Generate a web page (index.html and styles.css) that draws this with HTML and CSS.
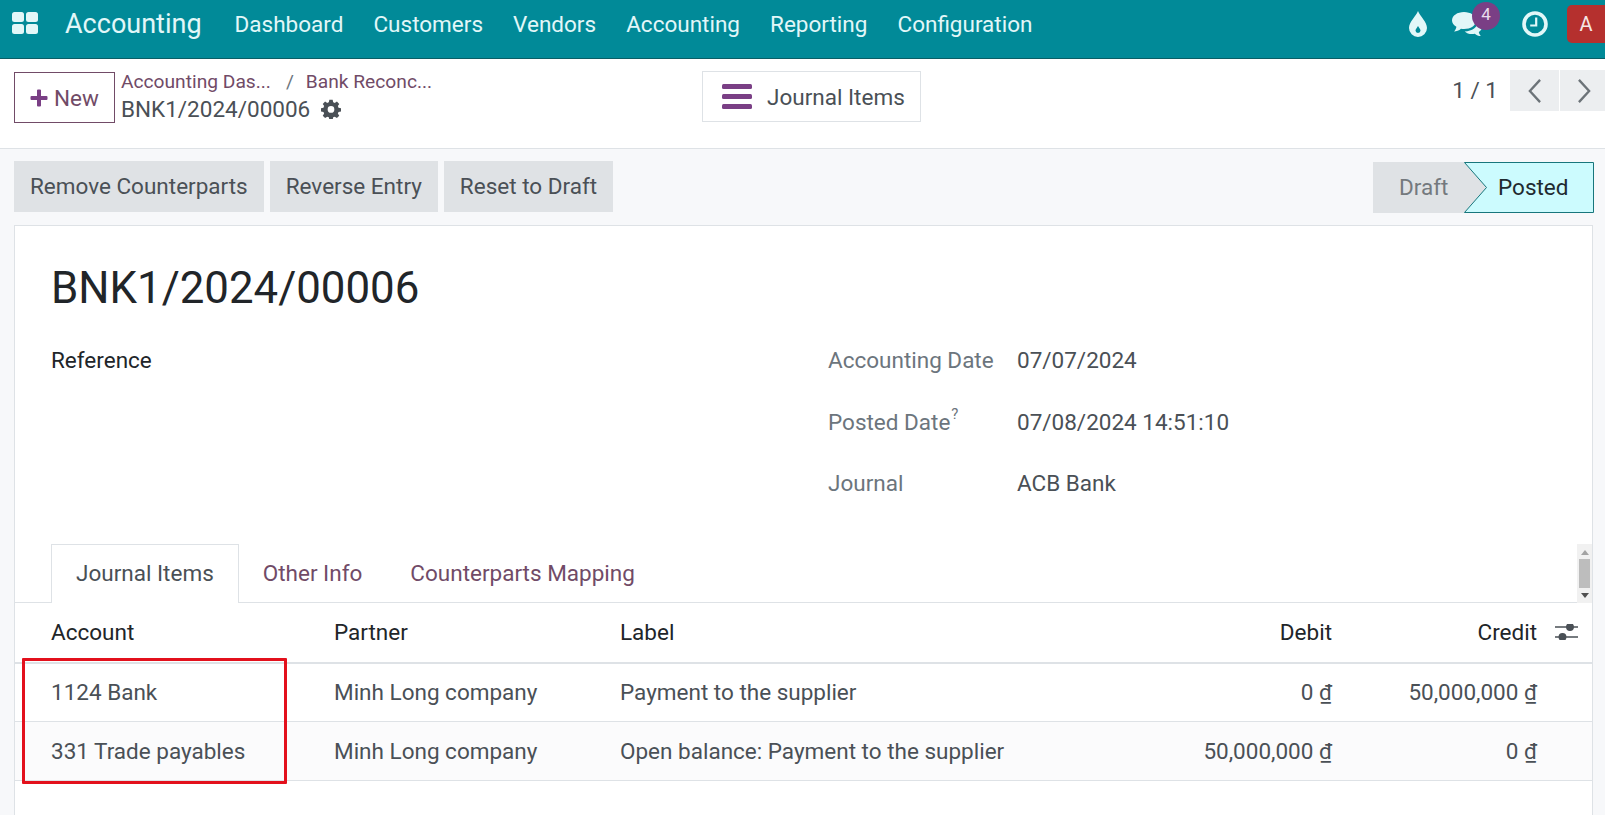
FILE: index.html
```html
<!DOCTYPE html>
<html lang="en">
<head>
<meta charset="utf-8">
<title>BNK1/2024/00006</title>
<link rel="stylesheet" href="styles.css">
</head>
<body>
<header class="navbar">
  <svg class="apps" viewBox="0 0 26 22" aria-hidden="true"><rect x="0" y="0" width="12" height="10" rx="2.5"/><rect x="14" y="0" width="12" height="10" rx="2.5"/><rect x="0" y="12" width="12" height="10" rx="2.5"/><rect x="14" y="12" width="12" height="10" rx="2.5"/></svg>
  <span class="brand">Accounting</span>
  <nav class="menu"><span>Dashboard</span><span>Customers</span><span>Vendors</span><span>Accounting</span><span>Reporting</span><span>Configuration</span></nav>
  <div class="systray">
    <svg class="drop" viewBox="0 0 18 26" aria-hidden="true"><path fill-rule="evenodd" d="M9 0C11 5 18 11 18 17a9 9 0 0 1-18 0C0 11 7 5 9 0ZM9 15c-1 2-2.500 3-2.500 4.500a2.500 2.500 0 0 0 5 0C11.500 18 10 17 9 15Z"/></svg>
    <span class="chat">
      <svg viewBox="0 0 30 24" aria-hidden="true"><path d="M12 0c6.600 0 12 3.500 12 8.500S18.600 17 12 17c-1 0-2-.1-3-.3C7 18.500 4.500 19.500 2 19.500c1.300-1.300 2.200-3 2.400-4.700C1.700 13.300 0 11 0 8.500 0 3.500 5.400 0 12 0Z"/><path d="M26 9.500c2.400 1.300 4 3.200 4 5.500 0 2-1.200 3.800-3.200 5 .2 1.400.9 2.800 2 4-2.200 0-4.300-.9-6-2.300-.9.200-1.800.3-2.800.3-3 0-5.600-1-7.300-2.600 7.400-.2 13.300-4.500 13.300-9.400v-.5Z"/></svg>
      <span class="badge">4</span>
    </span>
    <svg class="clock" viewBox="0 0 26 26" aria-hidden="true"><circle cx="13" cy="13" r="11" fill="none" stroke-width="3.600"/><path d="M14.200 6.500v8h-6" fill="none" stroke-width="2.200"/></svg>
    <span class="avatar">A</span>
  </div>
</header>

<section class="control">
  <button class="new"><svg class="plus" viewBox="0 0 18 18" aria-hidden="true"><path d="M7 1.500a1 1 0 0 1 1-1h2a1 1 0 0 1 1 1V7h5.500a1 1 0 0 1 1 1v2a1 1 0 0 1-1 1H11v5.500a1 1 0 0 1-1 1H8a1 1 0 0 1-1-1V11H1.500a1 1 0 0 1-1-1V8a1 1 0 0 1 1-1H7Z"/></svg>New</button>
  <div class="crumbs">
    <div class="crumb-links"><span>Accounting Das...</span><i>/</i><span>Bank Reconc...</span></div>
    <div class="crumb-current">BNK1/2024/00006
      <svg class="gear" viewBox="0 0 24 24" aria-hidden="true"><path fill-rule="evenodd" d="M10 1h4l.6 3c.7.200 1.300.500 1.900.8l2.600-1.700 2.800 2.800-1.700 2.600c.3.600.6 1.200.8 1.900l3 .6v4l-3 .6c-.2.700-.5 1.300-.8 1.900l1.700 2.600-2.800 2.800-2.600-1.700c-.6.300-1.200.6-1.900.8l-.6 3h-4l-.6-3c-.7-.2-1.300-.5-1.900-.8l-2.600 1.700-2.800-2.800 1.700-2.600c-.3-.6-.6-1.200-.8-1.900l-3-.6v-4l3-.6c.2-.7.500-1.300.8-1.900L2.100 5.900l2.800-2.800 2.600 1.700c.6-.3 1.200-.6 1.900-.8L10 1Zm2 7.500a4 4 0 1 0 0 8 4 4 0 0 0 0-8Z"/></svg>
    </div>
  </div>
  <button class="stat"><svg viewBox="0 0 30 25" aria-hidden="true"><rect y="0" width="30" height="5" rx="1.500"/><rect y="10" width="30" height="5" rx="1.500"/><rect y="20" width="30" height="5" rx="1.500"/></svg>Journal Items</button>
  <div class="pager">
    <span class="count">1 / 1</span>
    <span class="pg"><svg viewBox="0 0 16 28" aria-hidden="true"><path d="M14 2 3 14l11 12"/></svg></span>
    <span class="pg"><svg viewBox="0 0 16 28" aria-hidden="true"><path d="m2 2 11 12L2 26"/></svg></span>
  </div>
</section>

<main class="content">
  <div class="actions">
    <button class="act">Remove Counterparts</button>
    <button class="act">Reverse Entry</button>
    <button class="act">Reset to Draft</button>
    <div class="status">
      <span class="st-draft">Draft</span>
      <span class="st-posted">
        <svg viewBox="0 0 130 51" preserveAspectRatio="none" aria-hidden="true"><path d="M0.500 .5H129.500V50.500H0.500L22.500 25.500Z"/></svg>
        <b>Posted</b>
      </span>
    </div>
  </div>

  <article class="sheet">
    <h1>BNK1/2024/00006</h1>
    <div class="fields">
      <div class="ref">Reference</div>
      <dl class="meta">
        <dt>Accounting Date</dt><dd>07/07/2024</dd>
        <dt>Posted Date<sup>?</sup></dt><dd>07/08/2024 14:51:10</dd>
        <dt>Journal</dt><dd>ACB Bank</dd>
      </dl>
    </div>
    <div class="tabs">
      <span class="tab active">Journal Items</span>
      <span class="tab">Other Info</span>
      <span class="tab">Counterparts Mapping</span>
      <span class="scroll"><i class="up"></i><i class="thumb"></i><i class="down"></i></span>
    </div>
    <div class="table-wrap">
      <table>
        <thead>
          <tr><th>Account</th><th>Partner</th><th>Label</th><th class="num">Debit</th><th class="num">Credit</th>
            <th class="opt"><svg viewBox="0 0 23 16" aria-hidden="true"><path d="M0 3h23M0 13h23"/><circle cx="15" cy="3" r="3.200"/><circle cx="7.500" cy="13" r="3.200"/></svg></th></tr>
        </thead>
        <tbody>
          <tr><td>1124 Bank</td><td>Minh Long company</td><td>Payment to the supplier</td><td class="num">0 ₫</td><td class="num">50,000,000 ₫</td><td></td></tr>
          <tr class="alt"><td>331 Trade payables</td><td>Minh Long company</td><td>Open balance: Payment to the supplier</td><td class="num">50,000,000 ₫</td><td class="num">0 ₫</td><td></td></tr>
        </tbody>
      </table>
      <div class="highlight"></div>
    </div>
  </article>
</main>
</body>
</html>
```

FILE: styles.css
```css
* { box-sizing: border-box; }
html, body { height: 100%; }
body {
  margin: 0;
  width: 1605px;
  height: 815px;
  overflow: hidden;
  background: #f7f8fa;
  color: #4a5056;
  font-family: Roboto, "Noto Sans", sans-serif;
  font-size: 22.500px;
}
button { font: inherit; cursor: pointer; }

.navbar {
  height: 59px;
  display: flex;
  align-items: center;
  background: #018a98;
  border-bottom: 1px solid #0a5e66;
  color: #e2f7f8;
  padding: 0 18px 10px 12px;
}
.apps { width: 26px; height: 22px; fill: #e2f7f8; margin-bottom: 2px; }
.brand { font-size: 27px; margin-left: 27px; }
.menu { display: flex; gap: 30.100px; margin-left: 33px; }
.systray { margin-left: auto; display: flex; align-items: center; }
.drop { width: 18px; height: 26px; fill: #e2f7f8; }
.chat { position: relative; width: 30px; height: 24px; margin-left: 25px; }
.chat svg { width: 30px; height: 24px; fill: #e2f7f8; display: block; }
.badge {
  position: absolute; top: -10px; left: 20px;
  width: 28px; height: 28px; border-radius: 50%;
  background: #7a3f85; color: #e9dcec;
  font-size: 17px; text-align: center; line-height: 25px;
}
.clock { width: 26px; height: 26px; margin-left: 40px; stroke: #e2f7f8; }
.avatar {
  width: 38px; height: 38px; margin-left: 19px; margin-right: -18px;
  background: #b5302e; color: #f5e6e6; border-radius: 5px 0 0 5px;
  text-align: center; line-height: 38px; font-size: 20px;
}

.control {
  height: 90px;
  background: #fff;
  border-bottom: 1px solid #dee2e6;
  display: flex;
  align-items: flex-start;
  padding: 13px 0 0 14px;
  position: relative;
}
.new {
  width: 101px; height: 51px;
  border: 1px solid #714b67; background: #fff; color: #714b67;
  padding: 0; display: flex; align-items: center; justify-content: center; gap: 6px;
}
.plus { width: 18px; height: 18px; fill: #7a3f85; }
.crumbs { margin-left: 6px; width: 581px; }
.crumb-links { color: #714b67; font-size: 19.200px; line-height: 24px; display: flex; margin-top: -2px; }
.crumb-links i { font-style: normal; color: #6c757d; margin: 0 12px 0 15px; }
.crumb-current { font-size: 22.500px; line-height: 28px; margin-top: 1px; display: flex; align-items: center; gap: 11px; }
.gear { width: 20px; height: 20px; fill: #4a5056; }
.stat {
  width: 219px; height: 51px; margin-top: -1px;
  background: #fff; border: 1px solid #dee2e6; color: #4a5056;
  display: flex; align-items: center; padding: 0 0 0 19px; gap: 15px;
}
.stat svg { width: 30px; height: 25px; fill: #7a3f85; }
.pager { margin-left: auto; display: flex; align-items: flex-start; margin-top: -1px; }
.count { line-height: 38px; margin-right: 11px; }
.pg {
  width: 49px; height: 41px; margin-left: 1px; background: #eceef0; margin-top: -1px;
  display: flex; align-items: center; justify-content: center;
}
.pg svg { width: 15px; height: 26px; fill: none; stroke: #6c7378; stroke-width: 2.500; }
.pg + .pg { width: 45px; padding-left: 4px; }

.content { padding: 12px 11px 0 14px; }
.actions { display: flex; gap: 6px; height: 64px; }
.act {
  height: 51px; border: 0; background: #dfe2e5; color: #4a5056; padding: 0 16px 2px;
}
.status { margin-left: auto; display: flex; height: 51px; margin-top: 1px; }
.st-draft {
  width: 113px; margin-right: -22px; background: #dfe2e5; color: #74797e;
  line-height: 51px; padding-left: 26px;
}
.st-posted { position: relative; width: 130px; height: 51px; display: block; }
.st-posted svg { position: absolute; inset: 0; width: 100%; height: 100%; fill: #ccfbfe; stroke: #17767c; }
.st-posted b { position: relative; font-weight: 400; color: #1f2a30; line-height: 51px; padding-left: 34px; }

.sheet {
  background: #fff;
  border: 1px solid #dee2e6;
  border-bottom: 0;
  height: 590px;
  position: relative;
  margin-right: 1px;
}
h1 {
  font-size: 43.800px; font-weight: 400; color: #212529;
  margin: 0; padding: 36px 0 0 36px; line-height: 52px;
}
.fields { display: flex; height: 230px; padding-left: 36px; }
.ref { width: 777px; color: #212529; margin-top: 32px; line-height: 28px; }
.meta {
  margin: 32px 0 0; display: grid;
  grid-template-columns: 189px auto; grid-auto-rows: 61.500px; align-content: start;
}
.meta dt { color: #6c757d; line-height: 28px; }
.meta dd { margin: 0; line-height: 28px; }
.meta sup { font-size: 15px; line-height: 0; vertical-align: 11px; margin-left: 1px; }

.tabs {
  height: 59px; display: flex; border-bottom: 1px solid #dee2e6;
  padding-left: 36px; position: relative;
}
.tab { color: #714b67; padding: 0 24px; line-height: 59px; }
.tab.active {
  color: #4a5056; background: #fff; line-height: 57px;
  border: 1px solid #dee2e6; border-bottom: 0; height: 59px;
}
.scroll {
  position: absolute; right: 0; top: 0; width: 15px; height: 59px;
  background: #f1f1f1; display: flex; flex-direction: column; align-items: center;
}
.up { margin-top: 6px; border: 4px solid transparent; border-top: 0; border-bottom: 5px solid #a3a3a3; width: 0; }
.thumb { width: 11px; height: 29px; background: #bdbdbd; margin-top: 4px; }
.down { margin-top: 5px; border: 4px solid transparent; border-bottom: 0; border-top: 5px solid #505050; width: 0; }

.table-wrap { position: relative; }
table { width: 100%; border-collapse: collapse; table-layout: fixed; }
th { font-weight: 400; color: #212529; text-align: left; height: 60px; border-bottom: 2px solid #dee2e6; padding: 0 0 2px; }
td { height: 58.500px; border-bottom: 1px solid #dee2e6; padding: 0 0 2px; white-space: nowrap; }
.alt td { padding-bottom: 0; }
th:first-child, td:first-child { padding-left: 36px; width: 319px; }
th:nth-child(2) { width: 286px; }
th:nth-child(3) { width: 490px; }
th:nth-child(4) { width: 222px; }
th:nth-child(5) { width: 205px; }
.num { text-align: right; }
.alt td { background: #fbfbfc; }
.opt { padding-left: 18px; }
.opt svg { width: 23px; height: 16px; display: block; stroke: #4a5056; fill: #4a5056; stroke-width: 1.500; }
.highlight {
  position: absolute; left: 7px; top: 55px;
  width: 265px; height: 126px;
  border: 3px solid #e3101c; border-radius: 1px;
}
```
